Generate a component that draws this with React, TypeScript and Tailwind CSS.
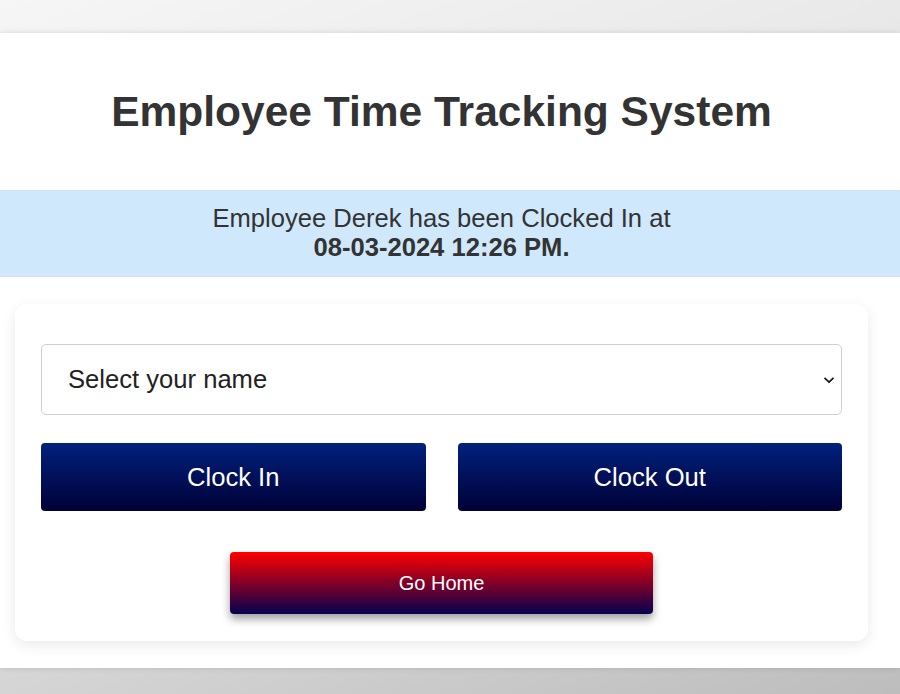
import React from "react";

export default function App() {
  return (
    <div
      className="min-h-[694px] w-full pt-[33px] pb-[26px] bg-[linear-gradient(160deg,#f6f6f6_0%,#e2e2e2_50%,#bdbdbd_100%)]"
      style={{ fontFamily: '"Liberation Sans", Arial, sans-serif' }}
    >
      <div className="bg-white h-[635px] shadow-[0_0_6px_rgba(0,0,0,0.12)] flex flex-col">
        <h1 className="pt-[54px] pr-[17px] text-center text-[42.5px] leading-[50px] font-bold text-[#333333]">
          Employee Time Tracking System
        </h1>
        <div className="mt-[53px] bg-[#cfe8fc] border-t border-b border-[#d6e3ee] pt-[13px] pb-[14px] pr-[17px] text-center text-[25.6px] leading-[29px] text-[#333333]">
          <div>Employee Derek has been Clocked In at</div>
          <div className="font-bold">08-03-2024 12:26 PM.</div>
        </div>
        <div className="mt-[27px] ml-[15px] w-[853px] bg-white rounded-[12px] shadow-[0_4px_14px_rgba(0,0,0,0.09)] pt-[40px] pb-[27px] px-[26px] flex flex-col">
          <div className="relative">
            <select
              className="appearance-none w-full h-[71px] border border-[#d0d0d0] rounded-[5px] pl-[26px] pr-[40px] text-[25.6px] text-[#222222] bg-white outline-none"
              style={{ fontFamily: '"Liberation Sans", Arial, sans-serif' }}
              defaultValue=""
            >
              <option value="">Select your name</option>
              <option value="derek">Derek</option>
            </select>
            <svg
              className="absolute right-[7px] top-1/2 -translate-y-1/2 pointer-events-none"
              width="12"
              height="8"
              viewBox="0 0 12 8"
              fill="none"
            >
              <path d="M1.5 1.8 L6 6 L10.5 1.8" stroke="#111" strokeWidth="1.7" />
            </svg>
          </div>
          <div className="mt-[28px] grid grid-cols-2 gap-[32px]">
            <button className="h-[68px] rounded-[4px] bg-[linear-gradient(to_bottom,#00217d,#000036)] text-white text-[25.6px]">
              Clock In
            </button>
            <button className="h-[68px] rounded-[4px] bg-[linear-gradient(to_bottom,#00217d,#000036)] text-white text-[25.6px]">
              Clock Out
            </button>
          </div>
          <div className="mt-[41px] flex justify-center">
            <button className="w-[423px] h-[62px] rounded-[4px] bg-[linear-gradient(to_bottom,#ff0000,#05004f)] text-white text-[20px] shadow-[0_5px_9px_rgba(0,0,0,0.38)]">
              Go Home
            </button>
          </div>
        </div>
      </div>
    </div>
  );
}
